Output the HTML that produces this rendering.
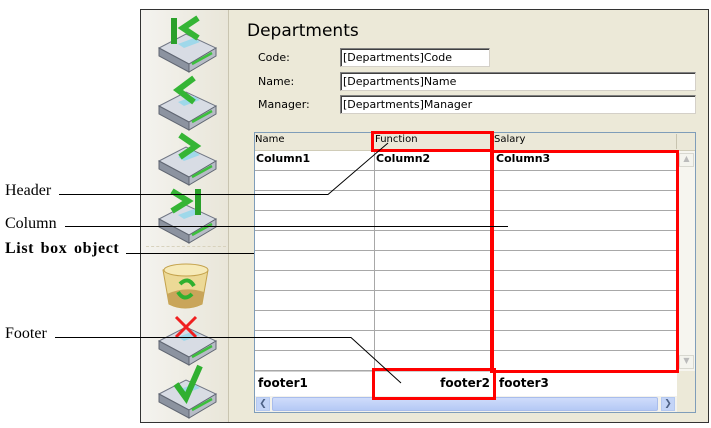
<!DOCTYPE html>
<html><head><style>
*{margin:0;padding:0;box-sizing:border-box}
body{width:711px;height:428px;background:#fff;position:relative;overflow:hidden;font-family:"DejaVu Sans",sans-serif}
.a{position:absolute}
.lbl{font-family:"Liberation Serif",serif;font-size:16px;color:#000}
.t{font-size:11px;font-family:"DejaVu Sans",sans-serif;color:#000}
.inp{background:#fff;border:1px solid #808080;border-right-color:#d4d0c8;border-bottom-color:#d4d0c8;box-shadow:inset 1px 1px 0 #404040;font-size:11px;padding:2px 0 0 2px;font-family:"DejaVu Sans",sans-serif}
.rb{border:3px solid #f00}
.b{font-size:11px;font-weight:bold;font-family:"DejaVu Sans",sans-serif}
</style></head><body>
<div class="a" style="left:140px;top:9px;width:569px;height:414px;border:1px solid #333;background:#ece9d8"></div>
<div class="a" style="left:141px;top:10px;width:88px;height:412px;background:linear-gradient(90deg,#f4f3ef,#e9e6d9);border-right:1px solid #c9c4b0"></div>
<div class="a" style="left:146px;top:246px;width:80px;border-top:1px dashed #d8d2bd"></div>

<svg class="a" style="left:150px;top:12px" width="75" height="410" viewBox="0 0 75 410">
<defs>
<g id="drv">
<path d="M9 24 L36 10 L66 24 L39 40 Z" fill="#d8dce4" stroke="#707684"/>
<path d="M9 24 L9 32 L39 48 L39 40 Z" fill="#8c93a0" stroke="#606672"/>
<path d="M39 40 L66 24 L66 32 L39 48 Z" fill="#b7bcc6" stroke="#606672"/>
<path d="M42 40 L62 29" stroke="#3cbf3c" stroke-width="2.5"/>
<path d="M28 20 L44 14 L50 18 L34 24 Z" fill="#9fd8ea"/>
</g>
</defs>
<g transform="translate(0,12)"><use href="#drv"/><path d="M24 -6 V20" stroke="#2aa02a" stroke-width="6"/><path d="M48 -6 L33 4 L48 14" stroke="#35b535" stroke-width="6" fill="none"/></g>
<g transform="translate(0,70)"><use href="#drv"/><path d="M44 -4 L28 8 L44 20" stroke="#35b535" stroke-width="6" fill="none"/></g>
<g transform="translate(0,125)"><use href="#drv"/><path d="M30 -2 L46 9 L30 20" stroke="#35b535" stroke-width="6" fill="none"/></g>
<g transform="translate(0,183)"><use href="#drv"/><path d="M22 -4 L38 6 L22 16" stroke="#35b535" stroke-width="6" fill="none"/><path d="M48 -6 V20" stroke="#2aa02a" stroke-width="6"/></g>
<g transform="translate(0,250)"><path d="M13 8 Q36 -2 58 8 L52 42 Q35 50 19 42 Z" fill="#ecd996" stroke="#c4a24c"/><ellipse cx="36" cy="8" rx="22" ry="6" fill="#f6eab8" stroke="#c4a24c"/><path d="M17 32 Q35 24 54 30 L52 42 Q35 50 19 42 Z" fill="#c9a55a"/><path d="M30 22 Q38 14 44 24 M42 32 Q34 40 28 30" stroke="#2fb02f" stroke-width="4" fill="none"/></g>
<g transform="translate(0,305)"><use href="#drv"/><path d="M26 0 L46 20 M46 0 L26 20" stroke="#f02020" stroke-width="3"/></g>
<g transform="translate(0,358)"><use href="#drv"/><path d="M26 14 L36 28 L50 -4" stroke="#30b030" stroke-width="6" fill="none"/></g>
</svg>

<div class="a" style="left:247px;top:21px;font-size:17px;font-family:'DejaVu Sans',sans-serif">Departments</div>
<div class="a t" style="left:258px;top:51px">Code:</div>
<div class="a t" style="left:258px;top:75px">Name:</div>
<div class="a t" style="left:258px;top:98px">Manager:</div>
<div class="a inp" style="left:340px;top:48px;width:150px;height:19px">[Departments]Code</div>
<div class="a inp" style="left:340px;top:72px;width:356px;height:19px">[Departments]Name</div>
<div class="a inp" style="left:340px;top:95px;width:356px;height:19px">[Departments]Manager</div>

<div class="a" style="left:254px;top:132px;width:442px;height:281px;border:1px solid #7f9db9;background:#fff"></div>
<div class="a" style="left:255px;top:133px;width:440px;height:18px;background:#ebe8d8;border-bottom:1px solid #d0ccb8"></div>
<div class="a" style="left:255px;top:134px;font-size:10px">Name</div>
<div class="a" style="left:375px;top:134px;font-size:10px">Function</div>
<div class="a" style="left:494px;top:134px;font-size:10px">Salary</div>
<div class="a" style="left:676px;top:134px;width:1px;height:15px;background:#c8c4b0"></div>
<div class="a" style="left:255px;top:151px;width:422px;height:220px;background:repeating-linear-gradient(180deg,#fff 0,#fff 19px,#a8a8a8 19px,#a8a8a8 20px)"></div>
<div class="a" style="left:374px;top:151px;width:1px;height:245px;background:#a8a8a8"></div>
<div class="a b" style="left:256px;top:152px">Column1</div>
<div class="a b" style="left:376px;top:152px">Column2</div>
<div class="a b" style="left:496px;top:152px">Column3</div>
<div class="a" style="left:677px;top:151px;width:18px;height:220px;background:#f6f5ef"></div>
<div class="a" style="left:679px;top:153px;width:15px;height:14px;border:1px solid #d8d8d0;background:#f4f4ee;font-size:8px;color:#bbb;text-align:center">▲</div>
<div class="a" style="left:679px;top:355px;width:15px;height:14px;border:1px solid #d8d8d0;background:#f4f4ee;font-size:8px;color:#bbb;text-align:center">▼</div>
<div class="a" style="left:677px;top:371px;width:18px;height:41px;background:#ece9d8"></div>
<div class="a" style="left:255px;top:371px;width:422px;height:25px;border-top:1px solid #d0d0d0;background:#fff"></div>
<div class="a b" style="left:258px;top:376px;font-size:12px">footer1</div>
<div class="a b" style="left:400px;top:376px;width:90px;text-align:right;font-size:12px">footer2</div>
<div class="a b" style="left:499px;top:376px;font-size:12px">footer3</div>
<div class="a" style="left:255px;top:396px;width:422px;height:16px;background:#f3f2ec"></div>
<div class="a" style="left:256px;top:397px;width:14px;height:14px;background:#c3d4f7;border:1px solid #b4c8f0;font-size:9px;color:#4d6185;text-align:center;line-height:13px">❮</div>
<div class="a" style="left:272px;top:397px;width:386px;height:14px;background:linear-gradient(#cfdcfb,#b5c9f5);border:1px solid #a9bdec;border-radius:2px"></div>
<div class="a" style="left:661px;top:397px;width:14px;height:14px;background:#c3d4f7;border:1px solid #b4c8f0;font-size:9px;color:#4d6185;text-align:center;line-height:13px">❯</div>

<div class="a rb" style="left:371px;top:131px;width:123px;height:21px"></div>
<div class="a rb" style="left:491px;top:150px;width:188px;height:223px"></div>
<div class="a" style="left:490px;top:131px;width:3px;height:242px;background:#f00"></div>
<div class="a rb" style="left:372px;top:368px;width:124px;height:32px"></div>

<div class="a lbl" style="left:5px;top:182px">Header</div>
<div class="a lbl" style="left:5px;top:215px">Column</div>
<div class="a lbl" style="left:5px;top:240px;font-weight:bold;letter-spacing:0.6px;word-spacing:2px">List box object</div>
<div class="a lbl" style="left:5px;top:325px">Footer</div>
<svg class="a" style="left:0;top:0" width="711" height="428">
<path d="M59 194.5 H328 L388 143" stroke="#000" fill="none"/>
<path d="M65 226.5 H508" stroke="#000"/>
<path d="M126 253.5 H254" stroke="#000"/>
<path d="M55 337.5 H351 L401 383" stroke="#000" fill="none"/>
</svg>
</body></html>
